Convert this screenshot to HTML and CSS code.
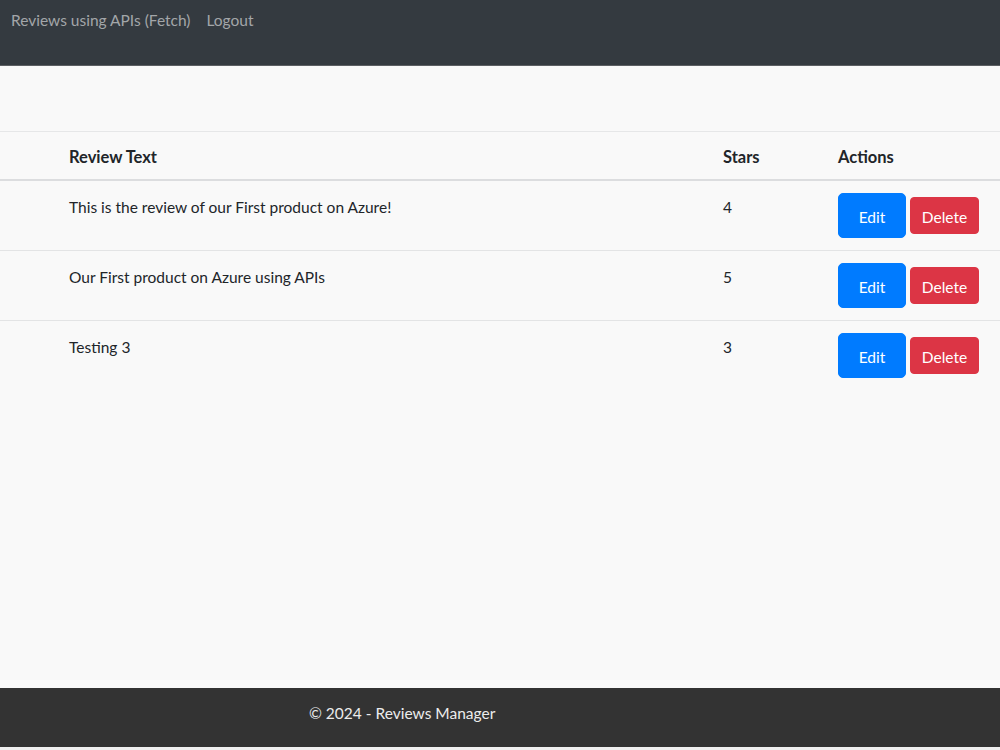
FILE: index.html
```html
<!DOCTYPE html>
<html lang="en">
<head>
    <meta charset="UTF-8">
    <meta name="viewport" content="width=device-width, initial-scale=1.0">
    <title>Reviews Manager</title>
    <link rel="stylesheet" href="styles.css">
</head>
<body>
    <header class="navbar">
        <a class="nav-link" href="#">Reviews using APIs (Fetch)</a>
        <a class="nav-link" href="#">Logout</a>
    </header>

    <main class="content">
        <table class="table">
            <thead>
                <tr>
                    <th class="col-id"></th>
                    <th>Review Text</th>
                    <th class="col-stars">Stars</th>
                    <th class="col-actions">Actions</th>
                </tr>
            </thead>
            <tbody>
                <tr>
                    <td></td>
                    <td>This is the review of our First product on Azure!</td>
                    <td>4</td>
                    <td class="cell-actions">
                        <div class="actions">
                            <button class="btn btn-edit">Edit</button>
                            <button class="btn btn-delete">Delete</button>
                        </div>
                    </td>
                </tr>
                <tr>
                    <td></td>
                    <td>Our First product on Azure using APIs</td>
                    <td>5</td>
                    <td class="cell-actions">
                        <div class="actions">
                            <button class="btn btn-edit">Edit</button>
                            <button class="btn btn-delete">Delete</button>
                        </div>
                    </td>
                </tr>
                <tr>
                    <td></td>
                    <td>Testing 3</td>
                    <td>3</td>
                    <td class="cell-actions">
                        <div class="actions">
                            <button class="btn btn-edit">Edit</button>
                            <button class="btn btn-delete">Delete</button>
                        </div>
                    </td>
                </tr>
            </tbody>
        </table>
    </main>

    <footer class="footer">
        &copy; 2024 - Reviews Manager
    </footer>
</body>
</html>
```

FILE: styles.css
```css
html, body {
    height: 100%;
}

body {
    margin: 0;
    font-family: Lato, "Liberation Sans", sans-serif;
    font-size: 15.5px;
    line-height: 24px;
    color: #212529;
    background: #f9f9f9;
    display: flex;
    flex-direction: column;
    height: 747px;
    border-bottom: 3px solid #f0f0f0;
}

.navbar {
    height: 66px;
    background: #343a40;
    border-bottom: 1px solid #5c5f63;
    display: flex;
    align-items: flex-start;
    gap: 16px;
    padding: 8px 11px 0;
    box-sizing: border-box;
}

.nav-link {
    color: #a3a6a9;
    text-decoration: none;
    line-height: 24px;
}

.content {
    flex: 1;
    padding-top: 65px;
}

.table {
    width: 100%;
    table-layout: fixed;
    border-collapse: collapse;
    border-top: 1px solid #e6e7e8;
}

.table th,
.table td {
    box-sizing: border-box;
    text-align: left;
    vertical-align: top;
    padding: 14px 8px 10px;
    border-bottom: 1px solid #e3e4e5;
}

.table tbody tr:last-child td {
    border-bottom: none;
}

.table thead th {
    font-size: 16.5px;
    font-weight: 700;
    border-bottom: 2px solid #dcdddf;
    padding: 13px 8px 10px;
}

.table td.cell-actions {
    padding: 12px 8px;
}

.col-id {
    width: 61px;
}

.col-stars {
    width: 115px;
}

.col-actions {
    width: 170px;
}

.actions {
    display: flex;
    align-items: center;
    gap: 4px;
}

.btn {
    font-family: inherit;
    font-size: 15.5px;
    color: #fff;
    border: 1px solid transparent;
    border-radius: 4px;
    cursor: pointer;
}

.btn-edit {
    background: #007bff;
    border-color: #007bff;
    line-height: 23px;
    padding: 12px 0 8px;
    width: 68px;
    border-radius: 5px;
}

.btn-delete {
    background: #dc3545;
    border-color: #dc3545;
    line-height: 23px;
    padding: 8px 0 4px;
    width: 69px;
}

.footer {
    height: 59px;
    background: #333333;
    color: #ececec;
    padding: 13px 0 0 309px;
    box-sizing: border-box;
}
```
